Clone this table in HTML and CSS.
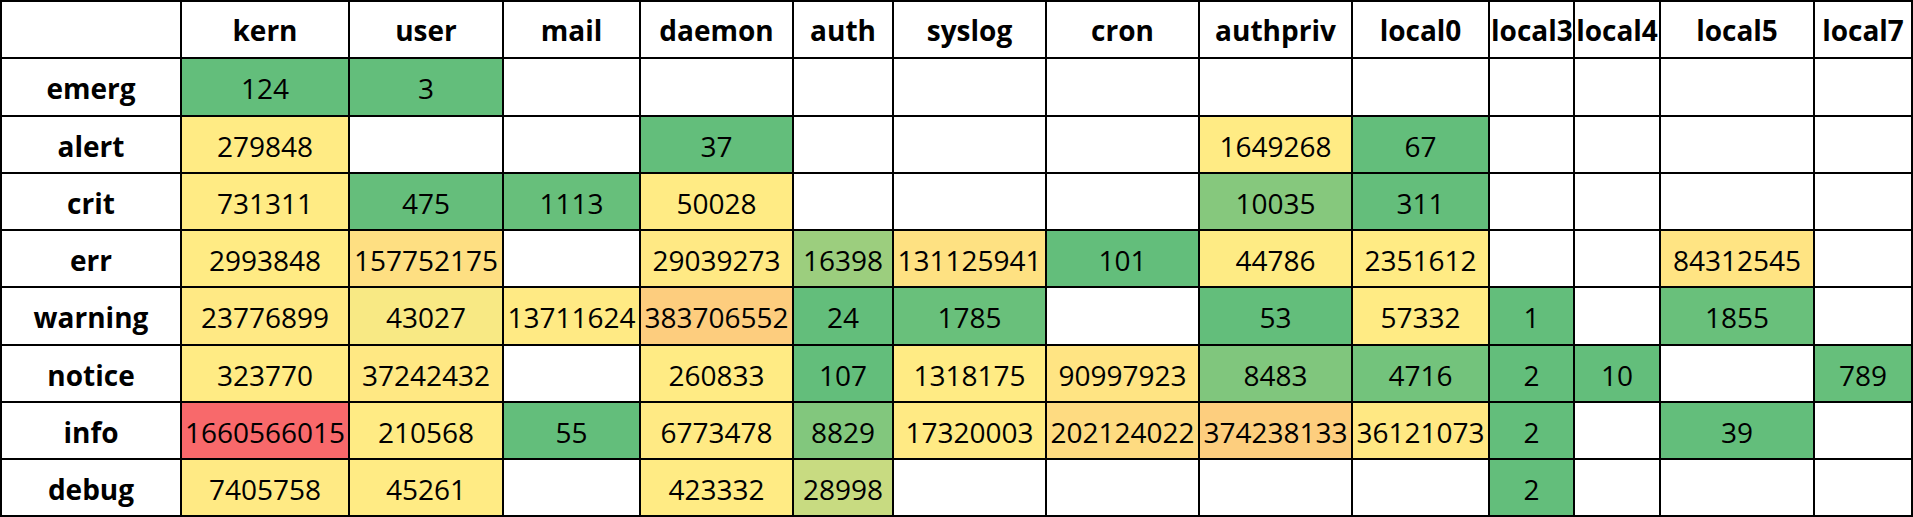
FILE: index.html
```html
<!DOCTYPE html>
<html lang="en">
<head>
<meta charset="utf-8">
<title>Syslog severity by facility</title>
<link rel="stylesheet" href="styles.css">
</head>
<body>
<table class="grid">
  <thead>
    <tr>
      <th class="c0"></th>
      <th class="c1">kern</th>
      <th class="c2">user</th>
      <th class="c3">mail</th>
      <th class="c4">daemon</th>
      <th class="c5">auth</th>
      <th class="c6">syslog</th>
      <th class="c7">cron</th>
      <th class="c8">authpriv</th>
      <th class="c9">local0</th>
      <th class="c10">local3</th>
      <th class="c11">local4</th>
      <th class="c12">local5</th>
      <th class="c13">local7</th>
    </tr>
  </thead>
  <tbody>
    <tr>
      <th>emerg</th>
      <td style="background:#63be7b">124</td>
      <td style="background:#63be7b">3</td>
      <td></td><td></td><td></td><td></td><td></td><td></td><td></td><td></td><td></td><td></td><td></td>
    </tr>
    <tr>
      <th>alert</th>
      <td style="background:#ffeb84">279848</td>
      <td></td>
      <td></td>
      <td style="background:#63be7b">37</td>
      <td></td><td></td><td></td>
      <td style="background:#ffeb84">1649268</td>
      <td style="background:#63be7b">67</td>
      <td></td><td></td><td></td><td></td>
    </tr>
    <tr>
      <th>crit</th>
      <td style="background:#ffeb84">731311</td>
      <td style="background:#65be7b">475</td>
      <td style="background:#67bf7b">1113</td>
      <td style="background:#ffeb84">50028</td>
      <td></td><td></td><td></td>
      <td style="background:#86c87d">10035</td>
      <td style="background:#64be7b">311</td>
      <td></td><td></td><td></td><td></td>
    </tr>
    <tr>
      <th>err</th>
      <td style="background:#ffeb84">2993848</td>
      <td style="background:#fedf82">157752175</td>
      <td></td>
      <td style="background:#ffe984">29039273</td>
      <td style="background:#9cce7e">16398</td>
      <td style="background:#fee182">131125941</td>
      <td style="background:#63be7b">101</td>
      <td style="background:#feeb84">44786</td>
      <td style="background:#ffeb84">2351612</td>
      <td></td>
      <td></td>
      <td style="background:#ffe483">84312545</td>
      <td></td>
    </tr>
    <tr>
      <th>warning</th>
      <td style="background:#ffe984">23776899</td>
      <td style="background:#f8e984">43027</td>
      <td style="background:#ffea84">13711624</td>
      <td style="background:#fdcd7e">383706552</td>
      <td style="background:#63be7b">24</td>
      <td style="background:#69c07b">1785</td>
      <td></td>
      <td style="background:#63be7b">53</td>
      <td style="background:#ffeb84">57332</td>
      <td style="background:#63be7b">1</td>
      <td></td>
      <td style="background:#69c07b">1855</td>
      <td></td>
    </tr>
    <tr>
      <th>notice</th>
      <td style="background:#ffeb84">323770</td>
      <td style="background:#ffe883">37242432</td>
      <td></td>
      <td style="background:#ffeb84">260833</td>
      <td style="background:#63be7b">107</td>
      <td style="background:#ffeb84">1318175</td>
      <td style="background:#ffe483">90997923</td>
      <td style="background:#80c67d">8483</td>
      <td style="background:#73c37c">4716</td>
      <td style="background:#63be7b">2</td>
      <td style="background:#63be7b">10</td>
      <td></td>
      <td style="background:#66bf7b">789</td>
    </tr>
    <tr>
      <th>info</th>
      <td style="background:#f8696b">1660566015</td>
      <td style="background:#ffeb84">210568</td>
      <td style="background:#63be7b">55</td>
      <td style="background:#ffea84">6773478</td>
      <td style="background:#82c77d">8829</td>
      <td style="background:#ffea84">17320003</td>
      <td style="background:#fedb81">202124022</td>
      <td style="background:#fdce7e">374238133</td>
      <td style="background:#ffe883">36121073</td>
      <td style="background:#63be7b">2</td>
      <td></td>
      <td style="background:#63be7b">39</td>
      <td></td>
    </tr>
    <tr>
      <th>debug</th>
      <td style="background:#ffea84">7405758</td>
      <td style="background:#ffeb84">45261</td>
      <td></td>
      <td style="background:#ffeb84">423332</td>
      <td style="background:#c8db81">28998</td>
      <td></td><td></td><td></td><td></td>
      <td style="background:#63be7b">2</td>
      <td></td><td></td><td></td>
    </tr>
  </tbody>
</table>
</body>
</html>
```

FILE: styles.css
```css
html, body {
  margin: 0;
  padding: 0;
  background: #ffffff;
}

.grid {
  table-layout: fixed;
  width: 1913px;
  border-collapse: separate;
  border-spacing: 0;
  border-top: 2px solid #000;
  border-left: 2px solid #000;
  font-family: "Open Sans", "Noto Sans", sans-serif;
  font-size: 28px;
  color: #000;
}

.grid th,
.grid td {
  box-sizing: border-box;
  height: 57.25px;
  padding: 0 1px;
  border-right: 2px solid #000;
  border-bottom: 2px solid #000;
  text-align: center;
  vertical-align: middle;
  white-space: nowrap;
  overflow: hidden;
  line-height: 38px;
}

.grid tbody th,
.grid tbody td {
  padding-top: 3px;
}

.grid th {
  font-weight: 700;
}

.grid td {
  font-weight: 400;
}

.c0 { width: 180px; }
.c1 { width: 168px; }
.c2 { width: 154px; }
.c3 { width: 137px; }
.c4 { width: 153px; }
.c5 { width: 100px; }
.c6 { width: 153px; }
.c7 { width: 153px; }
.c8 { width: 153px; }
.c9 { width: 137px; }
.c10 { width: 85px; }
.c11 { width: 86px; }
.c12 { width: 154px; }
.c13 { width: 98px; }
```
